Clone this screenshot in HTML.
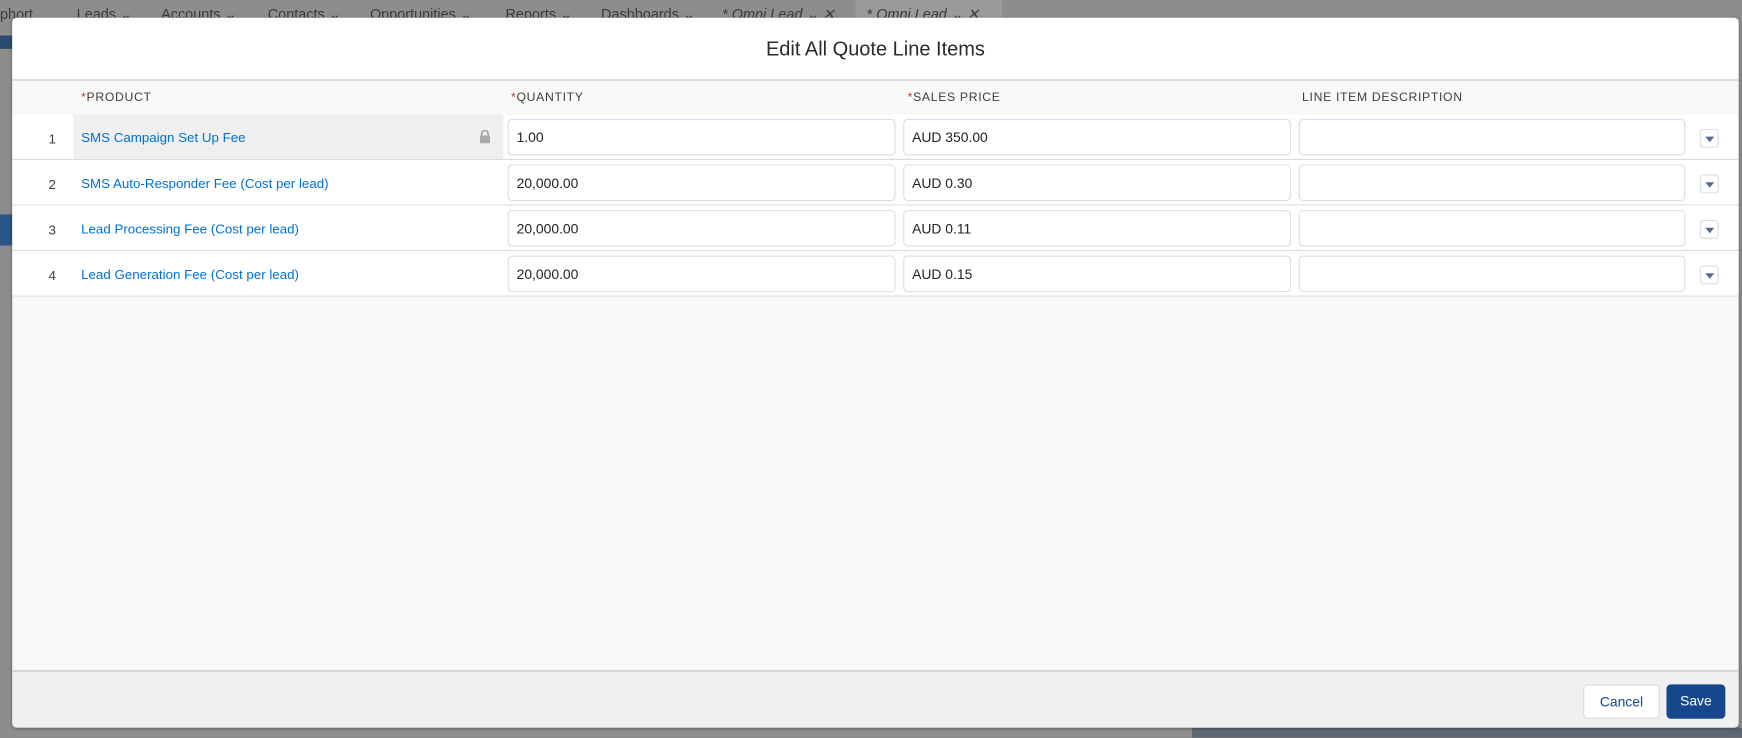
<!DOCTYPE html>
<html><head><meta charset="utf-8"><style>
html,body{margin:0;padding:0;width:1742px;height:738px;overflow:hidden;background:#8d8d8b;font-family:"Liberation Sans",sans-serif}
#w{position:absolute;left:0;top:0;width:1568px;height:664px;transform:scale(1.11097);transform-origin:0 0}
.a{position:absolute}
.tab{position:absolute;top:5px;font-size:13px;color:#3a3a3a;white-space:nowrap}
.m{position:absolute;left:11px;top:16px;width:1554px;height:639px;background:#f8f8f7;border-radius:4px;overflow:hidden;box-shadow:0 1px 3px rgba(0,0,0,.3)}
.hd{position:absolute;left:0;top:0;width:100%;height:55px;background:#fff;border-bottom:2px solid #dcdcdc;text-align:center;line-height:57px;font-size:18px;color:#2b2b2b}
.th{position:absolute;top:57px;height:30px;width:100%;background:#f8f8f7;border-bottom:1px solid #dddbda}
.lb{position:absolute;top:9px;font-size:11px;letter-spacing:.6px;color:#3e3e3c}
.lb b{color:#c23934;font-weight:normal}
.row{position:absolute;left:0;width:100%;height:40px;background:#fff;border-bottom:1px solid #dddbda}
.n{position:absolute;left:30px;width:12px;text-align:center;top:15px;font-size:12px;color:#3e3e3c}
.p{position:absolute;left:62px;top:14px;font-size:12px;color:#0070d2}
.in{position:absolute;top:4px;height:33px;border:1px solid #d8dde6;border-radius:4px;background:#fff;box-sizing:border-box;font-size:12.5px;color:#222;padding:9px 0 0 7px}
.dd{position:absolute;left:1519px;top:13px;width:17px;height:17px;border:1px solid #d8dde6;border-radius:3px;box-sizing:border-box;background:#fff}
.dd:after{content:"";position:absolute;left:4px;top:6px;border-left:4px solid transparent;border-right:4px solid transparent;border-top:5px solid #54698d}
.ft{position:absolute;left:0;top:587px;width:100%;height:52px;background:#f0f0f0;border-top:2px solid #d6d6d6}
.btn{position:absolute;top:11px;height:31px;border-radius:4px;box-sizing:border-box;font-size:12.5px;text-align:center;line-height:31px}
</style></head><body><div id="w">
<div class="tab" style="left:0">phort</div>
<div class="tab" style="left:69px">Leads ⌄</div>
<div class="tab" style="left:145px">Accounts ⌄</div>
<div class="tab" style="left:241px">Contacts ⌄</div>
<div class="tab" style="left:333px">Opportunities ⌄</div>
<div class="tab" style="left:455px">Reports ⌄</div>
<div class="tab" style="left:541px">Dashboards ⌄</div>
<div class="tab" style="left:650px;font-style:italic">* Omni Lead ⌄ ✕</div>
<div class="a" style="left:770px;top:0;width:132px;height:16px;background:#9a9a98"></div>
<div class="tab" style="left:780px;font-style:italic">* Omni Lead ⌄ ✕</div>
<div class="a" style="left:0;top:32px;width:11px;height:12px;background:#2a4a6e"></div>
<div class="a" style="left:0;top:193px;width:11px;height:28px;background:#2a5586"></div>
<div class="a" style="left:1073px;top:655px;width:495px;height:9px;background:#5f6672"></div>
<div class="m">
<div class="hd">Edit All Quote Line Items</div>
<div class="th">
<div class="lb" style="left:62px"><b>*</b>PRODUCT</div>
<div class="lb" style="left:449px"><b>*</b>QUANTITY</div>
<div class="lb" style="left:806px"><b>*</b>SALES PRICE</div>
<div class="lb" style="left:1161px">LINE ITEM DESCRIPTION</div>
</div>
<div class="row" style="top:87px"><div class="a" style="left:55px;top:0;width:387px;height:40px;background:#efefef"></div><div class="n">1</div><div class="p">SMS Campaign Set Up Fee</div>
<svg class="a" style="left:420px;top:14px" width="11" height="12" viewBox="0 0 11 12"><path d="M2.5 5V3.5a3 3 0 0 1 6 0V5" fill="none" stroke="#a8a8a8" stroke-width="1.6"/><rect x="1" y="5" width="9" height="7" rx="1" fill="#a8a8a8"/></svg>
<div class="in" style="left:446px;width:349px">1.00</div><div class="in" style="left:802px;width:349px">AUD 350.00</div><div class="in" style="left:1158px;width:348px"></div><div class="dd"></div></div>
<div class="row" style="top:128px"><div class="n">2</div><div class="p">SMS Auto-Responder Fee (Cost per lead)</div><div class="in" style="left:446px;width:349px">20,000.00</div><div class="in" style="left:802px;width:349px">AUD 0.30</div><div class="in" style="left:1158px;width:348px"></div><div class="dd"></div></div>
<div class="row" style="top:169px"><div class="n">3</div><div class="p">Lead Processing Fee (Cost per lead)</div><div class="in" style="left:446px;width:349px">20,000.00</div><div class="in" style="left:802px;width:349px">AUD 0.11</div><div class="in" style="left:1158px;width:348px"></div><div class="dd"></div></div>
<div class="row" style="top:210px"><div class="n">4</div><div class="p">Lead Generation Fee (Cost per lead)</div><div class="in" style="left:446px;width:349px">20,000.00</div><div class="in" style="left:802px;width:349px">AUD 0.15</div><div class="in" style="left:1158px;width:348px"></div><div class="dd"></div></div>
<div class="ft">
<div class="btn" style="left:1414px;width:69px;background:#fff;border:1px solid #d8dde6;color:#16478c">Cancel</div>
<div class="btn" style="left:1489px;width:53px;background:#16478c;color:#fff">Save</div>
</div>
</div>
</div></body></html>
